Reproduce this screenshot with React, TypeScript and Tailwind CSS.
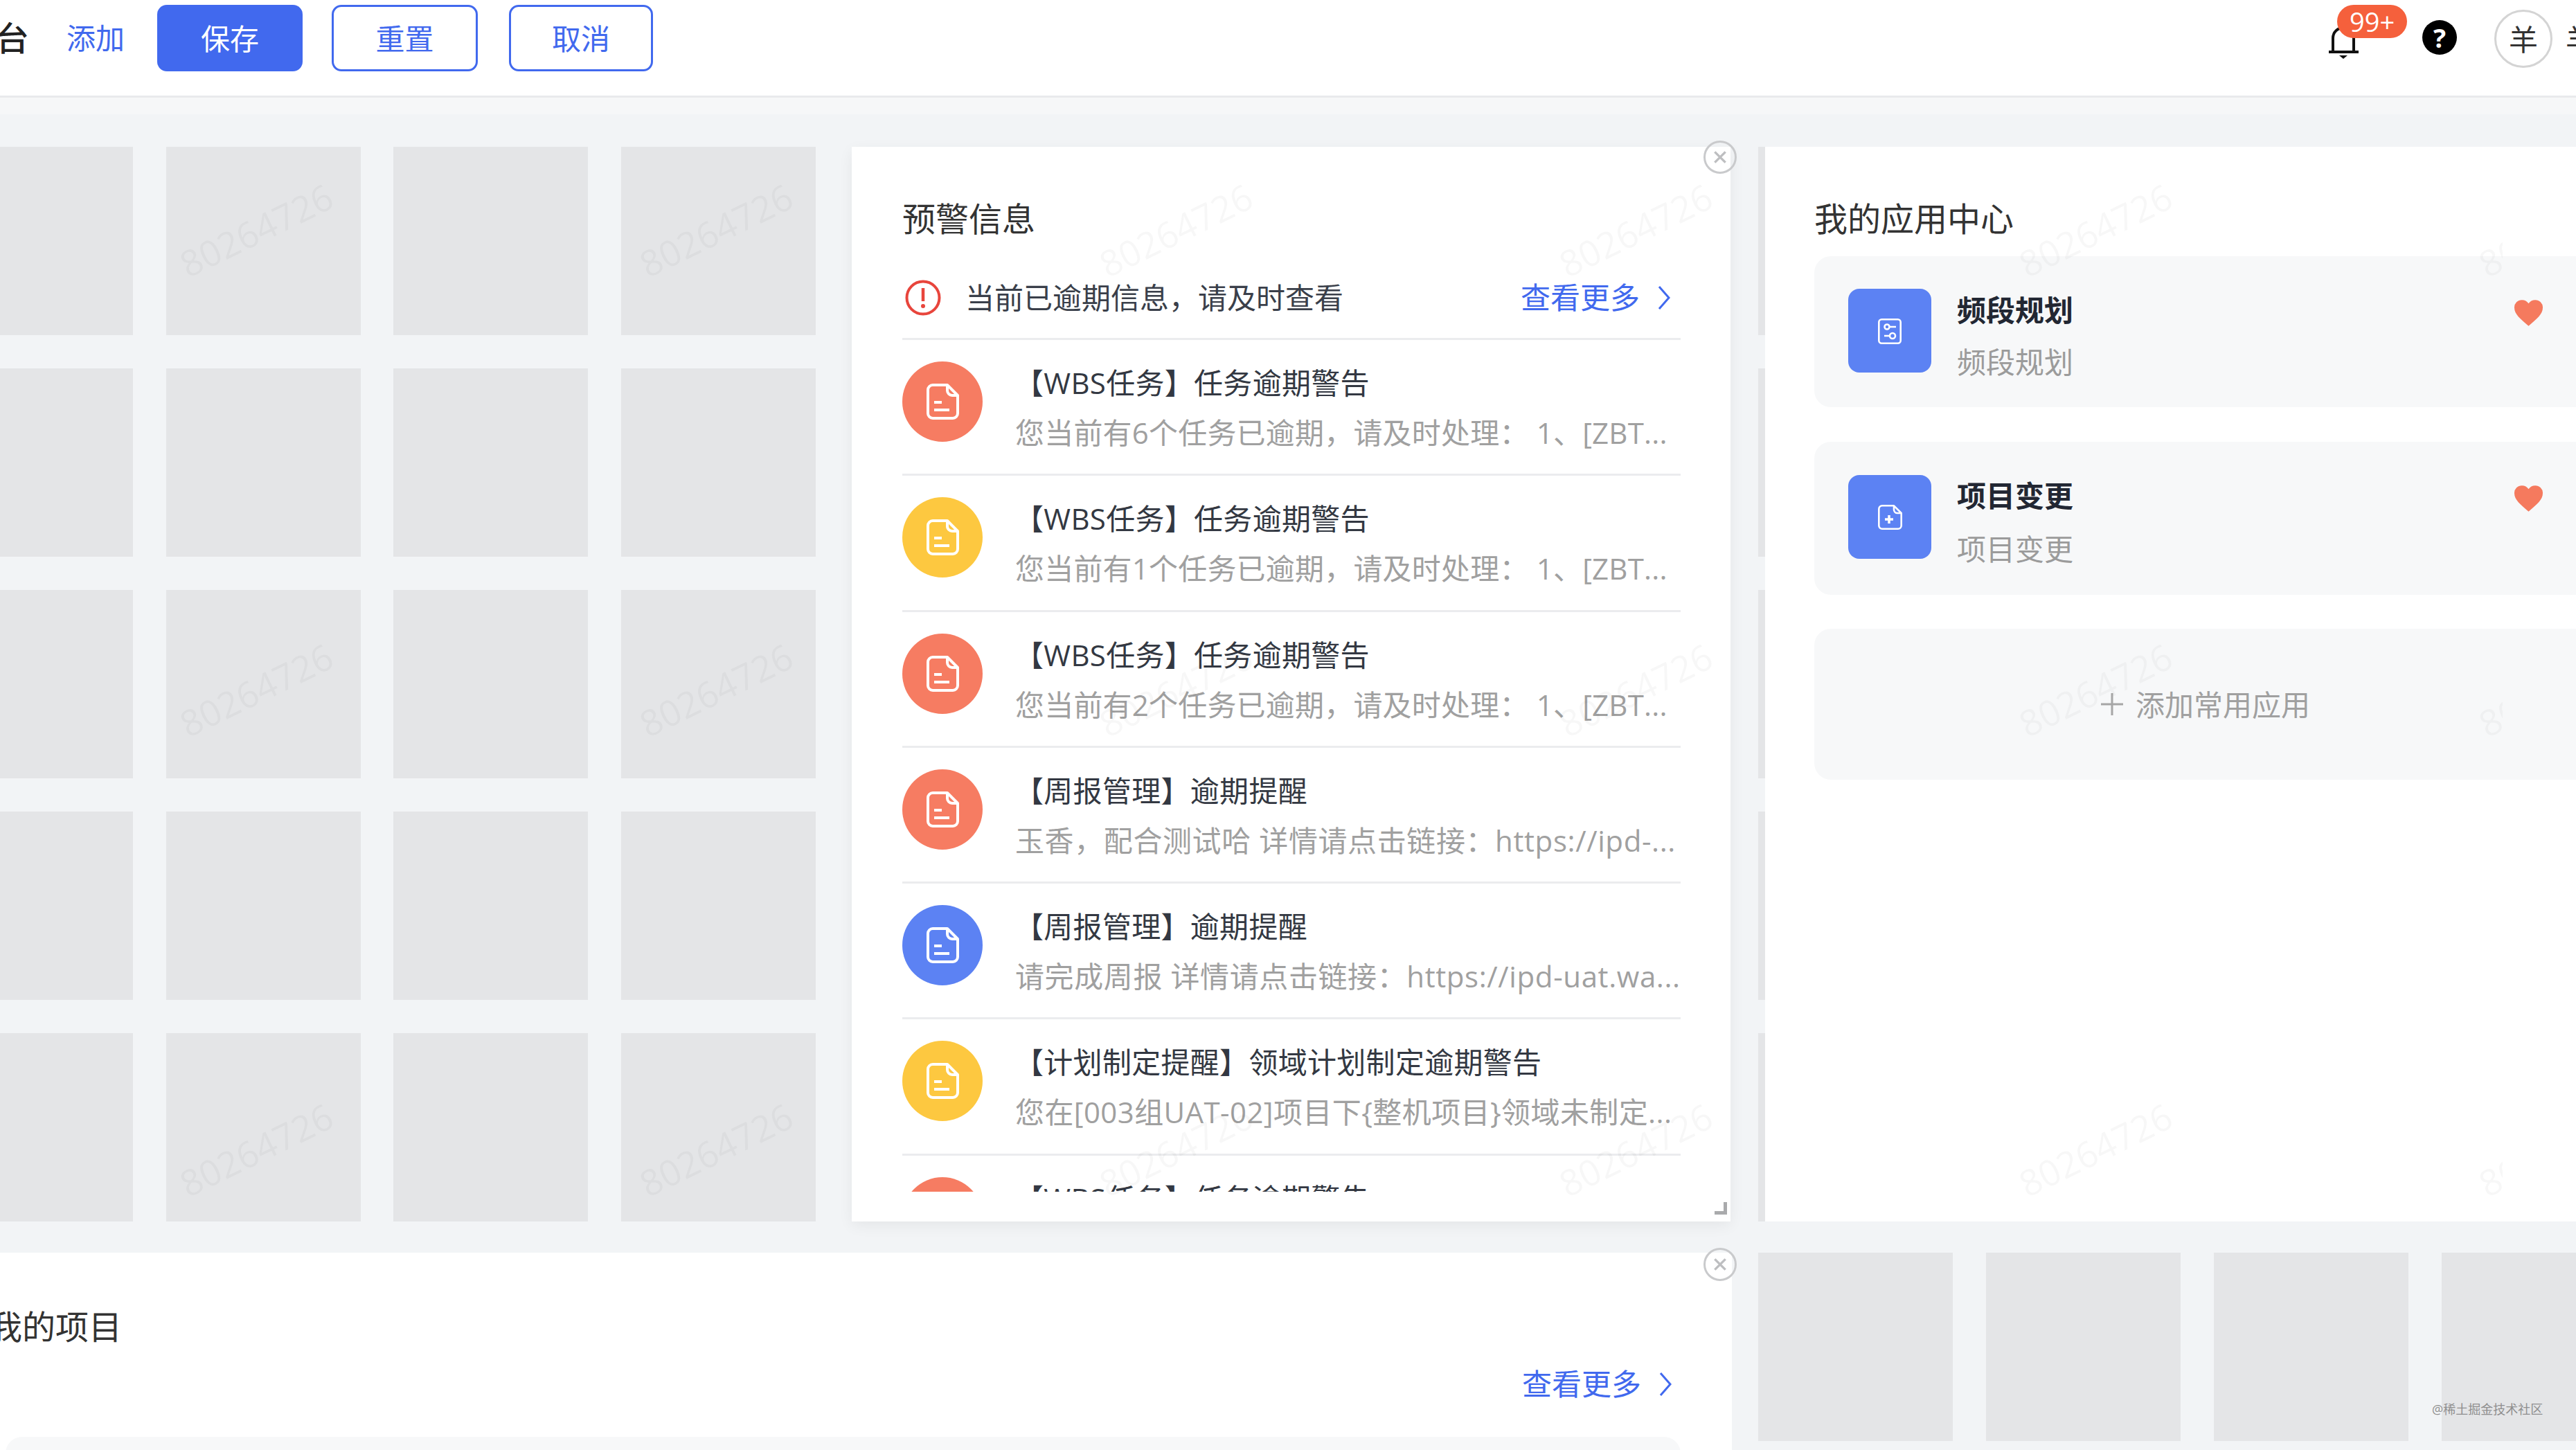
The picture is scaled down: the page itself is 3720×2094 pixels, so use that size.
const font = "font-['Open_Sans','Noto_Sans_CJK_SC',sans-serif]"

const rows = [0, 1, 2, 3, 4]

const alerts = [
  { color: "bg-[#f67c62]", title: "【WBS任务】任务逾期警告", desc: "您当前有6个任务已逾期，请及时处理： 1、[ZBT...", track: "tracking-[0.2px]" },
  { color: "bg-[#fdc840]", title: "【WBS任务】任务逾期警告", desc: "您当前有1个任务已逾期，请及时处理： 1、[ZBT...", track: "tracking-[0.2px]" },
  { color: "bg-[#f67c62]", title: "【WBS任务】任务逾期警告", desc: "您当前有2个任务已逾期，请及时处理： 1、[ZBT...", track: "tracking-[0.2px]" },
  { color: "bg-[#f67c62]", title: "【周报管理】逾期提醒", desc: "玉香，配合测试哈 详情请点击链接：https://ipd-...", track: "tracking-[0.6px]" },
  { color: "bg-[#5c82f3]", title: "【周报管理】逾期提醒", desc: "请完成周报 详情请点击链接：https://ipd-uat.wa...", track: "tracking-[0.6px]" },
  { color: "bg-[#fdc840]", title: "【计划制定提醒】领域计划制定逾期警告", desc: "您在[003组UAT-02]项目下{整机项目}领域未制定...", track: "tracking-[0.4px]" },
  { color: "bg-[#f67c62]", title: "【WBS任务】任务逾期警告", desc: "您当前有3个任务已逾期，请及时处理： 1、[ZBT...", track: "tracking-[0.2px]" },
]

const CloseButton = ({ className }: { className: string }) => (
  <div className={`absolute flex h-[48px] w-[48px] items-center justify-center rounded-full border-[3px] border-[#c9cacc] ${className}`}>
    <svg viewBox="0 0 20 20" className="h-[22px] w-[22px]" fill="none" stroke="#bdbec0" strokeWidth="3">
      <path d="M3 3l14 14M17 3L3 17" />
    </svg>
  </div>
)

const MoreLink = () => (
  <div className="flex items-center text-[43px] leading-[56px] text-[#4169ee]">
    <span>查看更多</span>
    <svg viewBox="0 0 20 36" className="ml-[25px] h-[36px] w-[20px]" fill="none" stroke="#4169ee" strokeWidth="3">
      <path d="M3 2l14 16L3 34" />
    </svg>
  </div>
)

const DocIcon = () => (
  <svg viewBox="0 0 47 52" className="h-[52px] w-[47px]" fill="none" stroke="#fff" strokeWidth="4" strokeLinejoin="round">
    <path d="M9 2h21l15 15v26a7 7 0 0 1-7 7H9a7 7 0 0 1-7-7V9a7 7 0 0 1 7-7z" />
    <path d="M30 2v8a7 7 0 0 0 7 7h8" />
    <path d="M11 27h11M11 38h22" />
  </svg>
)

const SliderDoc = () => (
  <svg viewBox="0 0 34 37" className="mt-[2px] h-[37px] w-[34px]" fill="none" stroke="#fff" strokeWidth="2.600">
    <rect x="1.300" y="1.300" width="31.400" height="34.400" rx="4" />
    <circle cx="13" cy="12" r="3.500" />
    <path d="M16.500 12H26M9 25h8" />
    <circle cx="21" cy="25" r="4" />
  </svg>
)

const PlusDoc = () => (
  <svg viewBox="0 0 35 36" className="mt-[2px] h-[36px] w-[35px]" fill="none" stroke="#fff" strokeWidth="2.600" strokeLinejoin="round">
    <path d="M6 1.300h17l10.700 10.700V30a4.700 4.700 0 0 1-4.700 4.700H6A4.700 4.700 0 0 1 1.300 30V6A4.700 4.700 0 0 1 6 1.300z" />
    <path d="M23 1.300V7a5 5 0 0 0 5 5h5.700" />
    <path d="M16 15v12M10 21h12" strokeWidth="3.500" />
  </svg>
)

const Heart = () => (
  <svg viewBox="0 0 24 22" className="h-[38px] w-[41px]" fill="#f57a5e">
    <path d="M12 22C5 16 0 12 0 6.500A6.300 6.300 0 0 1 6.500 0C8.700 0 10.800 1 12 3c1.200-2 3.300-3 5.500-3A6.300 6.300 0 0 1 24 6.500C24 12 19 16 12 22z" />
  </svg>
)

const AppCard = ({ name, icon, boxClass, tileClass, subClass }: { name: string; icon: React.ReactNode; boxClass: string; tileClass: string; subClass: string }) => (
  <div className={`flex items-start rounded-[24px] bg-[#f7f8f9] pl-[49px] ${boxClass}`}>
    <div className={`flex h-[121px] w-[120px] items-center justify-center rounded-[16px] bg-[#5c82f3] ${tileClass}`}>{icon}</div>
    <div className="ml-[37px] mt-[50px]">
      <div className="text-[42px] font-bold leading-[56px] text-[#222733]">{name}</div>
      <div className={`text-[42px] leading-[56px] text-[#9b9b9b] ${subClass}`}>{name}</div>
    </div>
    <div className="ml-[637px] mt-[63px]">
      <Heart />
    </div>
  </div>
)

const Cell = () => <div className="h-[272px] w-[281px] bg-[#e4e5e7]" />

export default function App() {
  return (
    <div className={`relative h-[2094px] w-[3720px] overflow-hidden bg-[#f2f4f6] ${font}`}>
      {/* header */}
      <div className="flex h-[141px] items-center border-b-[3px] border-[#e9eaec] bg-white">
        <span className="-ml-[6px] mb-[28px] w-[50px] shrink-0 text-[48px] font-medium leading-[64px] text-[#222]">台</span>
        <span className="ml-[52px] mb-[28px] shrink-0 text-[42px] leading-[56px] text-[#4169ee]">添加</span>
        <button className="ml-[47px] mb-[28px] h-[96px] w-[210px] shrink-0 rounded-[14px] bg-[#4169ee] text-[42px] text-white">保存</button>
        <button className="ml-[42px] mb-[28px] h-[96px] w-[211px] shrink-0 rounded-[14px] border-[3px] border-[#4169ee] bg-white text-[42px] text-[#4169ee]">重置</button>
        <button className="ml-[45px] mb-[28px] h-[96px] w-[208px] shrink-0 rounded-[14px] border-[3px] border-[#4169ee] bg-white text-[42px] text-[#4169ee]">取消</button>
        <div className="relative ml-[2420px] mb-[20px] h-[52px] w-[43px] shrink-0">
          <svg viewBox="0 0 43 52" className="h-[52px] w-[43px]" fill="none" stroke="#111" strokeWidth="4">
            <path d="M0 42h43M6 42V22a15 15 0 0 1 30 0v20" />
            <path d="M15 47h12l-6 5z" fill="#111" stroke="none" />
          </svg>
          <div className="absolute -top-[26px] left-[12px] flex h-[48px] w-[101px] items-center justify-center rounded-full bg-[#f5603c] text-[38px] leading-none text-white">99+</div>
        </div>
        <div className="ml-[92px] mb-[30px] flex h-[50px] w-[50px] shrink-0 items-center justify-center rounded-full bg-black text-[38px] font-bold leading-none text-white">?</div>
        <div className="ml-[54px] mb-[26px] flex h-[84px] w-[84px] shrink-0 items-center justify-center rounded-full border-[3px] border-[#d4d4d4] text-[42px] text-[#333]">羊</div>
        <span className="ml-[19px] mb-[26px] shrink-0 text-[42px] text-[#333]">羊</span>
      </div>
      <div className="h-[24px] bg-[#f6f7f8]" />

      <div className="pt-[47px]">
        {/* top row */}
        <div className="flex h-[1552px]">
          <div className="-ml-[89px] grid w-[1267px] shrink-0 grid-cols-4 gap-x-[47.500px] gap-y-[48px]">
            {rows.flatMap((r) => [0, 1, 2, 3].map((c) => <Cell key={`${r}-${c}`} />))}
          </div>

          {/* alerts */}
          <div className="relative ml-[52px] h-[1552px] w-[1269px] shrink-0 bg-white pl-[73px] pr-[72px] pt-[72px] shadow-[0_6px_20px_rgba(0,0,0,0.06)]">
            <CloseButton className="-right-[9px] -top-[9px]" />
            <div className="text-[48px] leading-[64px] text-[#333]">预警信息</div>
            <div className="mt-[23px] flex h-[120px] items-center border-b-[3px] border-[#ebecee]">
              <svg viewBox="0 0 52 52" className="ml-[4px] h-[52px] w-[52px]" fill="none" stroke="#e8453c" strokeWidth="4">
                <circle cx="26" cy="26" r="23.500" />
                <path d="M26 12v19" strokeWidth="4.500" />
                <circle cx="26" cy="38" r="3" fill="#e8453c" stroke="none" />
              </svg>
              <span className="ml-[35px] text-[42px] leading-[56px] text-[#3a3f4a]">当前已逾期信息，请及时查看</span>
              <div className="ml-auto mr-[14px]">
                <MoreLink />
              </div>
            </div>
            <div className="h-[1230px] overflow-hidden">
              {alerts.map((a, i) => (
                <div key={i} className="flex h-[196.300px] items-start border-b-[3px] border-[#ebecee]">
                  <div className={`mt-[31px] flex h-[116px] w-[116px] shrink-0 items-center justify-center rounded-full ${a.color}`}>
                    <DocIcon />
                  </div>
                  <div className="ml-[46px] whitespace-nowrap pt-[34px]">
                    <div className="text-[42px] leading-[56px] tracking-[0.3px] text-[#333842]">{a.title}</div>
                    <div className={`ml-[1px] mt-[16px] text-[42px] leading-[56px] text-[#a0a0a0] ${a.track}`}>{a.desc}</div>
                  </div>
                </div>
              ))}
            </div>
            <svg viewBox="0 0 18 18" className="absolute bottom-[10px] right-[5px] h-[18px] w-[18px]" fill="#a9aaac">
              <path d="M13 0h5v18H0v-5h13z" />
            </svg>
          </div>

          {/* app center, runs off the right edge */}
          <div className="ml-[40px] grid w-[10px] shrink-0 grid-rows-5 gap-y-[48px]">
            {rows.map((r) => (
              <div key={r} className="h-[272px] bg-[#e4e5e7]" />
            ))}
          </div>
          <div className="h-[1552px] w-[1300px] shrink-0 bg-white pl-[71px] pr-[99px] pt-[72px]">
            <div className="text-[48px] leading-[64px] text-[#333]">我的应用中心</div>
            <div className="mt-[22px] flex flex-col gap-[49.500px]">
              <AppCard name="频段规划" icon={<SliderDoc />} boxClass="h-[218px]" tileClass="mt-[47px]" subClass="mt-[19px]" />
              <AppCard name="项目变更" icon={<PlusDoc />} boxClass="h-[221px]" tileClass="mt-[48px]" subClass="mt-[21px]" />
              <div className="flex h-[218px] items-center justify-center rounded-[24px] bg-[#f7f8f9] text-[42px] text-[#a0a0a0]">
                <svg viewBox="0 0 32 32" className="mr-[18px] h-[32px] w-[32px]" fill="none" stroke="#a6a6a6" strokeWidth="3">
                  <path d="M16 0v32M0 16h32" />
                </svg>
                添加常用应用
              </div>
            </div>
          </div>
        </div>

        {/* bottom row */}
        <div className="mt-[45px] flex">
          <div className="relative h-[300px] w-[2501px] shrink-0 bg-white">
            <CloseButton className="-right-[7px] -top-[7px]" />
            <div className="absolute -left-[16px] top-[75px] text-[48px] leading-[64px] text-[#333]">我的项目</div>
            <div className="absolute right-[86px] top-[162px]">
              <MoreLink />
            </div>
            <div className="absolute left-[8px] top-[266px] h-[40px] w-[2419px] rounded-t-[24px] bg-[#f7f8f9]" />
          </div>
          <div className="ml-[38px] flex shrink-0 gap-x-[48px]">
            {[0, 1, 2, 3].map((c) => (
              <Cell key={c} />
            ))}
          </div>
        </div>
      </div>

      {/* page watermark */}
      <div className="pointer-events-none absolute left-[38px] top-0 grid h-[1992px] w-[3576px] grid-cols-[repeat(6,664px)] grid-rows-[repeat(3,664px)] overflow-hidden">
        {Array.from({ length: 18 }).map((_, i) => (
          <div key={i} className="flex items-center justify-center">
            <span className="-rotate-[26deg] text-[52px] leading-none text-black/[0.03]">80264726</span>
          </div>
        ))}
      </div>

      <div className="absolute left-[3512px] top-[2022px] text-[18px] leading-[26px] text-[#8f8f8f]">@稀土掘金技术社区</div>
    </div>
  )
}
